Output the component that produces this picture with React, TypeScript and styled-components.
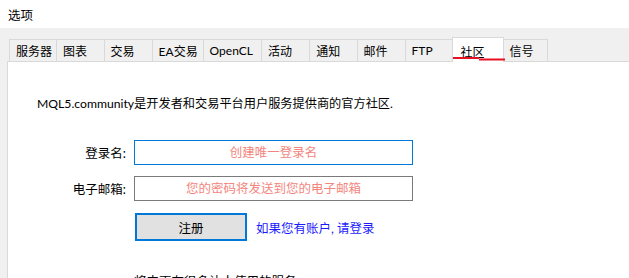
import React from "react";
import styled, { createGlobalStyle } from "styled-components";

const FONT = `Lato, "Noto Sans CJK SC", sans-serif`;

const GlobalStyle = createGlobalStyle`
  html, body {
    margin: 0;
    padding: 0;
    background: #ffffff;
  }
  body {
    font-family: ${FONT};
    color: #000000;
  }
`;

const Window = styled.div`
  width: 629px;
  height: 278px;
  overflow: hidden;
  display: flex;
  flex-direction: column;
  background: #ffffff;
`;

const TitleBar = styled.div`
  height: 28px;
  flex: none;
  display: flex;
  align-items: center;
  padding-left: 8px;
  font-size: 12.5px;
  background: #ffffff;
`;

const Body = styled.div`
  flex: 1;
  display: flex;
  flex-direction: column;
  background: #f0f0f0;
  padding: 11px 0 0 7px;
`;

const TabStrip = styled.div`
  display: flex;
  align-items: flex-end;
  height: 22px;
  padding-left: 2px;
  position: relative;
  z-index: 1;
`;

const Tab = styled.div<{ $w: number; $active?: boolean }>`
  position: relative;
  box-sizing: border-box;
  width: ${(p) => p.$w}px;
  height: ${(p) => (p.$active ? 25 : 22)}px;
  margin-left: -1px;
  margin-bottom: ${(p) => (p.$active ? -1 : 0)}px;
  padding: ${(p) => (p.$active ? "2px 0 0 8px" : "0 0 0 6px")};
  display: flex;
  align-items: center;
  font-size: 12px;
  border: 1px solid #d9d9d9;
  border-bottom: none;
  background: ${(p) => (p.$active ? "#ffffff" : "#f0f0f0")};
  z-index: ${(p) => (p.$active ? 2 : 1)};
  &:first-child {
    margin-left: 0;
  }
`;

const Squiggle = styled.svg`
  position: absolute;
  left: 0;
  bottom: 0;
`;

const Panel = styled.div`
  flex: 1;
  background: #ffffff;
  border-top: 1px solid #d9d9d9;
  border-left: 1px solid #d9d9d9;
  padding: 33px 0 0 29px;
`;

const Intro = styled.p`
  margin: 0;
  font-size: 12.2px;
  line-height: 18px;
`;

const Form = styled.div`
  margin-top: 27px;
  display: grid;
  grid-template-columns: 89px 279px auto;
  column-gap: 8px;
  row-gap: 11px;
  align-items: center;
`;

const Label = styled.label`
  font-size: 12.5px;
  text-align: right;
  white-space: nowrap;
`;

const Field = styled.input<{ $focused?: boolean }>`
  box-sizing: border-box;
  width: 279px;
  height: 25px;
  margin: 0;
  border: 1px solid ${(p) => (p.$focused ? "#0078d7" : "#7a7a7a")};
  outline: none;
  background: #ffffff;
  text-align: center;
  font-family: ${FONT};
  font-size: 12.5px;
  &::placeholder {
    color: #f3857d;
    opacity: 1;
  }
`;

const ActionRow = styled.div`
  grid-column: 2 / 4;
  display: flex;
  align-items: center;
  gap: 9px;
  margin: 1px 0 0 1px;
`;

const Button = styled.button`
  box-sizing: border-box;
  width: 112px;
  height: 28px;
  border: 2px solid #0078d7;
  background: #e1e1e1;
  font-family: ${FONT};
  font-size: 12.5px;
  color: #000000;
  padding: 0;
`;

const LoginLink = styled.a`
  color: #1a1aff;
  font-size: 12.5px;
  text-decoration: none;
  white-space: nowrap;
`;

const Note = styled.p`
  margin: 32px 0 0 97px;
  font-size: 12.5px;
  line-height: 18px;
  white-space: nowrap;
`;

const tabs: { label: string; w: number }[] = [
  { label: "服务器", w: 48 },
  { label: "图表", w: 48.6 },
  { label: "交易", w: 49 },
  { label: "EA交易", w: 52 },
  { label: "OpenCL", w: 59.4 },
  { label: "活动", w: 49.3 },
  { label: "通知", w: 48.3 },
  { label: "邮件", w: 49 },
  { label: "FTP", w: 48 },
  { label: "社区", w: 52 },
  { label: "信号", w: 45 },
];

export default function App() {
  return (
    <>
      <GlobalStyle />
      <Window>
        <TitleBar>选项</TitleBar>
        <Body>
          <TabStrip>
            {tabs.map((t) => {
              const active = t.label === "社区";
              return (
                <Tab key={t.label} $w={t.w} $active={active}>
                  {t.label}
                  {active && (
                    <Squiggle width="52" height="5" viewBox="0 0 52 5">
                      <rect x="0" y="0" width="26" height="2" fill="#e81123" />
                      <rect x="26" y="1.5" width="26" height="2" fill="#e81123" />
                    </Squiggle>
                  )}
                </Tab>
              );
            })}
          </TabStrip>
          <Panel>
            <Intro>MQL5.community是开发者和交易平台用户服务提供商的官方社区.</Intro>
            <Form>
              <Label>登录名:</Label>
              <Field $focused placeholder="创建唯一登录名" readOnly />
              <span />
              <Label>电子邮箱:</Label>
              <Field placeholder="您的密码将发送到您的电子邮箱" readOnly />
              <span />
              <span />
              <ActionRow>
                <Button>注册</Button>
                <LoginLink href="#">如果您有账户, 请登录</LoginLink>
              </ActionRow>
            </Form>
            <Note>将来更有很多让人使用的服务</Note>
          </Panel>
        </Body>
      </Window>
    </>
  );
}
